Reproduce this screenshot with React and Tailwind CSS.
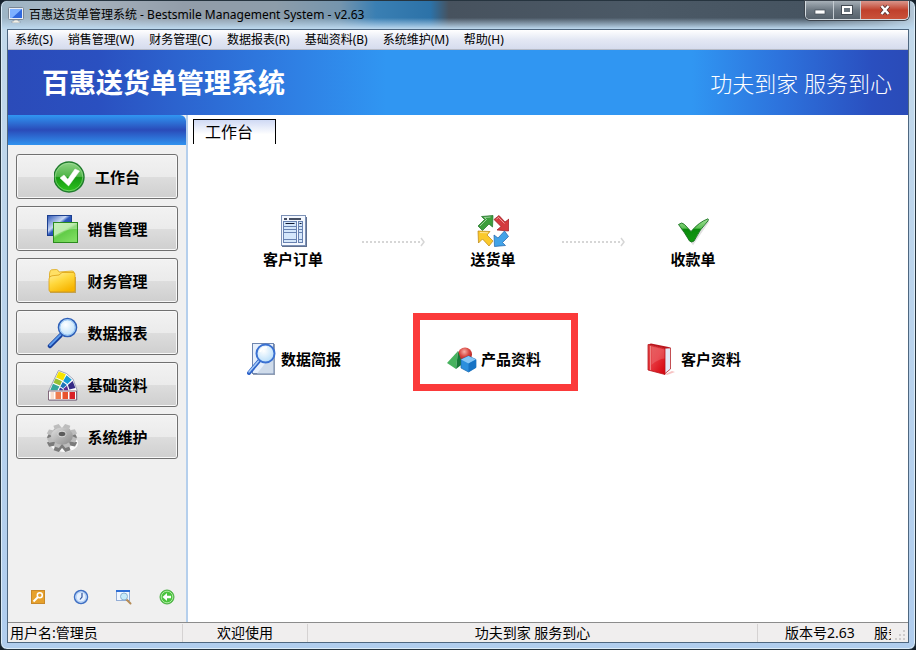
import React from "react";

const menus = ["系统(S)", "销售管理(W)", "财务管理(C)", "数据报表(R)", "基础资料(B)", "系统维护(M)", "帮助(H)"];

function Defs() {
  return (
    <svg width="0" height="0" className="absolute" aria-hidden="true">
      <defs>
        <linearGradient id="green" x1="0" y1="0" x2="0" y2="1">
          <stop offset="0" stopColor="#8fd486" />
          <stop offset="0.48" stopColor="#4fb548" />
          <stop offset="0.52" stopColor="#159a12" />
          <stop offset="1" stopColor="#2fc41f" />
        </linearGradient>
        <linearGradient id="check" x1="0" y1="0" x2="0" y2="1">
          <stop offset="0" stopColor="#a5e29a" />
          <stop offset="0.4" stopColor="#5cc055" />
          <stop offset="0.45" stopColor="#0a8a0c" />
          <stop offset="1" stopColor="#139a12" />
        </linearGradient>
        <linearGradient id="bluePane" x1="0" y1="0" x2="1" y2="1">
          <stop offset="0" stopColor="#2d55b5" />
          <stop offset="0.4" stopColor="#c9d8f4" />
          <stop offset="0.5" stopColor="#2c58bd" />
          <stop offset="1" stopColor="#163f9c" />
        </linearGradient>
        <linearGradient id="greenPane" x1="0" y1="0" x2="0.7" y2="1">
          <stop offset="0" stopColor="#b5eba0" />
          <stop offset="0.45" stopColor="#a2e48c" />
          <stop offset="0.55" stopColor="#62cc48" />
          <stop offset="1" stopColor="#7fdd62" />
        </linearGradient>
        <linearGradient id="folder" x1="0" y1="0" x2="0.6" y2="1">
          <stop offset="0" stopColor="#fff0a0" />
          <stop offset="0.5" stopColor="#ffd83d" />
          <stop offset="1" stopColor="#f7b500" />
        </linearGradient>
        <radialGradient id="lens" cx="0.4" cy="0.35" r="0.7">
          <stop offset="0" stopColor="#ffffff" />
          <stop offset="1" stopColor="#b4dcfa" />
        </radialGradient>
        <linearGradient id="steel" x1="0" y1="0" x2="1" y2="1">
          <stop offset="0" stopColor="#e2e2e2" />
          <stop offset="0.5" stopColor="#b4b4b4" />
          <stop offset="1" stopColor="#8a8a8a" />
        </linearGradient>
        <linearGradient id="redBook" x1="0" y1="0" x2="1" y2="1">
          <stop offset="0" stopColor="#e04a4a" />
          <stop offset="0.5" stopColor="#e5333a" />
          <stop offset="1" stopColor="#d4000b" />
        </linearGradient>
        <radialGradient id="redBall" cx="0.45" cy="0.3" r="0.7">
          <stop offset="0" stopColor="#f7b0a8" />
          <stop offset="0.5" stopColor="#d8453f" />
          <stop offset="1" stopColor="#a91a18" />
        </radialGradient>
      </defs>
    </svg>
  );
}

function Icon({ size = 32, children }) {
  return (
    <svg width={size} height={size} viewBox={"0 0 " + size + " " + size} className="shrink-0" aria-hidden="true">
      {children}
    </svg>
  );
}

const Ok = () => (
  <Icon>
    <circle cx="15" cy="16" r="15" fill="url(#green)" stroke="#1f7a2c" strokeWidth="1.4" />
    <circle cx="15" cy="16" r="13.8" fill="none" stroke="#a9e0a2" strokeWidth="0.8" opacity="0.7" />
    <path d="M6 17l4-3 3.800 4.300L21 8l4.500 2L14.600 25z" fill="#fff" stroke="#fff" strokeWidth="0.5" strokeLinejoin="round" />
  </Icon>
);

const Panes = () => (
  <Icon>
    <rect x="1.5" y="2.5" width="24" height="20" fill="url(#bluePane)" stroke="#1c3f8f" />
    <rect x="7.5" y="9.5" width="24" height="20" fill="url(#greenPane)" stroke="#2c8a1e" />
    <path d="M8 10h23v6Q20 15 8 23z" fill="#fff" opacity="0.3" />
  </Icon>
);

const Folder = () => (
  <Icon>
    <path d="M4 28V12h26v16z" fill="#b98c1c" opacity="0.7" />
    <path d="M3.500 9q0-3.500 2-4.200l5-.3q1.500 0 2.500 2.500L26 6q2 0 2.200 2v4H3.500z" fill="#ffe065" stroke="#dca81c" strokeWidth="0.8" />
    <path d="M3 14q.3-3 3-3.200L13 10l3-2.500h11q2 0 2 2V25q0 1.800-2 1.800H5q-2 0-2-1.800z" fill="url(#folder)" stroke="#dca012" strokeWidth="0.8" />
  </Icon>
);

const Magnifier = () => (
  <Icon>
    <path d="M4 29L14.500 18.500" stroke="#173f9c" strokeWidth="4.500" strokeLinecap="round" />
    <path d="M4 28.300L14.500 17.800" stroke="#5c9bed" strokeWidth="2" strokeLinecap="round" />
    <circle cx="21.500" cy="10.500" r="9" fill="url(#lens)" stroke="#2f60b8" strokeWidth="1.600" />
    <circle cx="21.500" cy="10.500" r="7.700" fill="none" stroke="#8bbdf2" strokeWidth="1" />
  </Icon>
);

const Swatches = () => (
  <Icon>
    <path d="M3 31V21L12.500 1.500l8 3L27 10l4 11v10z" fill="#fff" stroke="#8a8fa8" strokeWidth="0.8" />
    <path d="M12.800 2.500l7 2.800-2.800 6.200-7-3z" fill="#f5e400" />
    <path d="M9.500 9.300l6.500 2.900-2 4.300-6.500-2.800z" fill="#97bf35" />
    <path d="M7 14.800l6.400 2.700-2 3.700H4.200z" fill="#35a69b" />
    <path d="M20.600 6.200l5.200 4.600-4.300 4.300-4.300-3z" fill="#169bd5" />
    <path d="M16.800 13l4 2.900-3.700 3.300-2.700-1.700z" fill="#1d72b8" />
    <path d="M26.700 12l2.700 7-6 1.500-1.500-4.500z" fill="#352a85" />
    <path d="M21 16.800l1.400 4.400H18l-.6-1.500z" fill="#5f2d91" />
    <path d="M14 18.500l2.600 1.600.4 1.100h-4z" fill="#3c3c9d" />
    <path d="M2.500 22h28v9h-28z" fill="#fff" stroke="#6a4a60" strokeWidth="0.8" />
    <path d="M4.500 23h3.500v7H4.500z" fill="#f8ded0" />
    <path d="M9.500 23h5.500v7H9.500z" fill="#ef7d51" />
    <path d="M16.500 23H22v7h-5.500z" fill="#e8542f" />
    <path d="M23.500 23H29v7h-5.500z" fill="#d91f26" />
  </Icon>
);

const teeth = [0, 45, 90, 135, 180, 225, 270, 315];
const Gear = () => (
  <Icon>
    <ellipse cx="18" cy="22" rx="14" ry="9" fill="#fff" opacity="0.9" />
    <g transform="translate(16 19) scale(0.95 0.75)" fill="#7b7b7b">
      {teeth.map((a) => (
        <path key={a} d="M-4-9l1-7h6l1 7z" transform={"rotate(" + (a + 22) + ")"} />
      ))}
      <circle r="11" />
    </g>
    <g transform="translate(16 15) scale(0.95 0.75)">
      {teeth.map((a) => (
        <path key={a} d="M-4-9l1-7h6l1 7z" transform={"rotate(" + (a + 22) + ")"} fill="#bdbdbd" />
      ))}
      <circle r="11.500" fill="url(#steel)" />
    </g>
    <ellipse cx="16" cy="13" rx="4" ry="2.800" fill="#5c5c5c" stroke="#ececec" strokeWidth="0.8" />
  </Icon>
);

const Doc = () => (
  <Icon>
    <path d="M5 2h25v30H5z" fill="#60708f" />
    <rect x="4.500" y="0.500" width="24" height="30" fill="#f4f8ff" stroke="#7c91b6" />
    <path d="M7 4h3M12 4h12" stroke="#0d1730" strokeWidth="1.300" />
    <rect x="6.500" y="6.500" width="13" height="21" fill="#d5e7fb" stroke="#6882b1" />
    <rect x="21.500" y="6.500" width="4" height="21" fill="#d5e7fb" stroke="#6882b1" />
    <path d="M8.500 8.500h9M22.500 8.500h2" stroke="#0d1730" />
    <path d="M7 11.500h12M7 14.500h12M7 17.500h12M7 24.500h12M22 11.500h3M22 14.500h3M22 17.500h3M22 24.500h3" stroke="#6882b1" />
  </Icon>
);

const Cycle = () => (
  <Icon>
    <path d="M1 11L7.500 4.500 4.500 1.500 16 .5 15.500 12 12 9 5.500 15.500z" fill="#3c9e3c" stroke="#1f6f28" strokeWidth="0.7" />
    <path d="M17 4.500l5-4 6 6.500 4-3-.5 12L20 15l4-3.500z" fill="#d43b3f" stroke="#96191e" strokeWidth="0.7" />
    <path d="M1 16l12 .5-3 3.500 6 6-4 5-6.500-7L1.500 28z" fill="#fbc92c" stroke="#b98413" strokeWidth="0.7" />
    <path d="M17 20l.5 11.500 11-1-3-3 6-6-4-5.500-6.500 7z" fill="#42a3e8" stroke="#1f62a8" strokeWidth="0.7" />
    <path d="M3 11l6.500-6.500L7.500 2.500l6-.5M19.500 4l2-1.500 6 6M3 17.500l8 .3" stroke="#fff" strokeWidth="1" fill="none" opacity="0.5" />
  </Icon>
);

const Check = () => (
  <Icon>
    <path d="M4 13L16 28.500 31.500 6" fill="none" stroke="#999" strokeWidth="2" opacity="0.3" />
    <path d="M1.500 9.500Q5 6.500 7.500 9.500l6.500 7Q22 7 31 3.800q1 .3 0 2Q23 14 17 26q-2.500 2-4.500 0Q7.500 17 1.500 9.500z" fill="url(#check)" stroke="#17701f" strokeWidth="0.9" />
  </Icon>
);

const Report = () => (
  <Icon>
    <path d="M6 1h22v31H6z" fill="#8f9cb2" />
    <rect x="5.500" y="0.500" width="21" height="30" fill="#e7f0fc" stroke="#6f86af" />
    <path d="M26.500 10v20.500H10z" fill="#cfdbea" />
    <path d="M2 30L12 18" stroke="#2f63c9" strokeWidth="4" strokeLinecap="round" />
    <path d="M2 29L12 17.500" stroke="#a7ccf7" strokeWidth="1.500" strokeLinecap="round" />
    <circle cx="18.500" cy="10.500" r="9" fill="url(#lens)" stroke="#3b71d2" strokeWidth="2" />
    <path d="M13 9q2-5 7-4.500" stroke="#fff" strokeWidth="2" fill="none" />
  </Icon>
);

const Shapes = () => (
  <Icon>
    <circle cx="18" cy="11.500" r="7" fill="url(#redBall)" />
    <path d="M11 8L0 20l9 6z" fill="#47b25e" />
    <path d="M11 8l4.500 13L9 26z" fill="#167a37" />
    <path d="M21.500 13l7.500 3.500v8L21.500 29 14 25v-8.500z" fill="#2c8fdd" stroke="#1767af" strokeWidth="0.7" />
    <path d="M14 16.500l7.500 4 7.500-4-7.500-3.500z" fill="#85c6f6" />
    <path d="M21.500 20.500V29l7.500-4.500v-8z" fill="#1673c4" />
  </Icon>
);

const Book = () => (
  <Icon>
    <path d="M18 31l7-3 3 1-8 3z" fill="#f4aaaa" opacity="0.7" />
    <path d="M17.500 5l6 0v21l-6 5z" fill="#e3e8f7" stroke="#b8242a" strokeWidth="0.8" />
    <path d="M1 1.500L4 .5 24 4.500 18 5.500z" fill="#b9151c" />
    <path d="M1 1.500l17 4v26L1 27z" fill="url(#redBook)" stroke="#b8141c" strokeWidth="0.8" />
    <path d="M3.500 3v24" stroke="#ef8585" strokeWidth="1" />
    <path d="M4.500 3.500l13 3v9Q11 16 4.500 22z" fill="#fff" opacity="0.15" />
  </Icon>
);

const sideItems = [
  ["工作台", Ok],
  ["销售管理", Panes],
  ["财务管理", Folder],
  ["数据报表", Magnifier],
  ["基础资料", Swatches],
  ["系统维护", Gear],
];

const KeyIcon = () => (
  <Icon size={16}>
    <rect x="1.500" y="1.500" width="13" height="13" fill="#e6a12c" stroke="#c9892a" />
    <path d="M3.500 12.500L8 8" stroke="#fff" strokeWidth="2" />
    <circle cx="9.800" cy="6.200" r="2.500" fill="none" stroke="#fff" strokeWidth="1.500" />
  </Icon>
);
const ClockIcon = () => (
  <Icon size={16}>
    <circle cx="8" cy="8" r="6.500" fill="#e6f1ff" stroke="#3f70c4" strokeWidth="1.500" />
    <circle cx="8" cy="8" r="5" fill="none" stroke="#a7c8f3" />
    <path d="M9 4v4l-2 2.500" fill="none" stroke="#30549c" strokeWidth="1.200" />
  </Icon>
);
const FindIcon = () => (
  <Icon size={16}>
    <rect x="0.500" y="1.500" width="13" height="10" fill="#f1f7ff" stroke="#93add6" />
    <path d="M0 1h14v2H0z" fill="#2f6fd6" />
    <path d="M10.500 10.500l4 4" stroke="#b58b56" strokeWidth="2" strokeLinecap="round" />
    <circle cx="8" cy="7.500" r="3.500" fill="#c6ebfa" stroke="#8fb2d0" />
  </Icon>
);
const BackIcon = () => (
  <Icon size={16}>
    <circle cx="8" cy="8" r="7" fill="#49c33d" stroke="#4cae45" />
    <circle cx="8" cy="8" r="5.800" fill="none" stroke="#a9ea9c" />
    <path d="M3.500 8L8 4v2.700h4v2.600H8V12z" fill="#fff" />
  </Icon>
);

function FlowArrow() {
  return (
    <svg width="64" height="10" viewBox="0 0 64 10" className="mt-[22px] shrink-0" aria-hidden="true">
      <path d="M1 5h58" stroke="#d6d6d6" strokeWidth="2" strokeDasharray="2 2" />
      <path d="M60 1l3 4-3 4" fill="none" stroke="#d6d6d6" strokeWidth="1.500" />
    </svg>
  );
}

function Step({ icon: I, label }) {
  return (
    <button type="button" className="flex w-[136px] shrink-0 flex-col items-center gap-[2px] text-[15px] leading-[20px] font-bold">
      <I />
      {label}
    </button>
  );
}

function Shortcut({ icon: I, label, marked }) {
  return (
    <button type="button" className="relative flex h-8 w-[136px] shrink-0 items-center justify-center gap-[2px] text-[15px] leading-[20px] font-bold">
      <I />
      {label}
      {marked && <span className="pointer-events-none absolute -top-[30px] -right-4 -bottom-4 -left-[13px] border-[7px] border-[#fb3a3a]" />}
    </button>
  );
}

export default function App() {
  return (
    <div className="min-h-screen bg-[#15202b] font-['Noto_Sans','Noto_Sans_CJK_SC',sans-serif] text-black">
      <Defs />
      <div className="flex min-h-screen flex-col rounded-[7px] border border-[#26343f] bg-linear-to-b from-[#c3d9ea] to-[#b0cdee] px-[6px] pb-[6px] shadow-[inset_0_0_0_1px_#dcecf8]">
        <header className="-mx-[5px] flex h-7 shrink-0 items-start rounded-t-[6px] bg-[linear-gradient(to_bottom,transparent_60%,#bdd9ef_100%),linear-gradient(to_right,#9db5c6_0%,#a8b4bf_8%,#929da9_20%,#8d9daa_30%,#7595ad_37%,#3a7fb3_41%,#2c72a8_47%,#47525e_49%,#4b5966_70%,#465461_88%,#7f8d99_96%,#b5c8d8_100%)] pl-[6px]">
          <div className="flex h-7 grow items-center gap-[5px] text-[12px]">
            <svg width="16" height="16" viewBox="0 0 16 16" aria-hidden="true">
              <rect x="0.500" y="0.500" width="15" height="12" rx="1" fill="#e8eef7" stroke="#7b8794" />
              <rect x="2" y="2" width="12" height="9" fill="#2f68df" />
              <path d="M2 2h12L4 11H2z" fill="#7db0ff" />
              <path d="M6 13h4v1h2v2H4v-2h2z" fill="#f1f1e8" stroke="#7b8794" strokeWidth="0.500" />
            </svg>
            <h1 className="whitespace-nowrap">百惠送货单管理系统 - Bestsmile Management System - v2.63</h1>
          </div>
          <div className="mr-[5px] flex h-[19px] shrink-0 overflow-hidden rounded-b-[5px] border border-t-0 border-[#d5dce2] shadow-[0_0_0_1px_#3b434c]">
            <button type="button" aria-label="最小化" className="flex w-7 items-center justify-center border-r border-[#c5ccd2] bg-linear-to-b from-[#a7b0b8] via-[#6d7882] via-50% to-[#56616b]">
              <svg width="12" height="12" viewBox="0 0 12 12"><rect x="1" y="6" width="10" height="4" fill="#fff" stroke="#444c55" strokeWidth="0.700" /></svg>
            </button>
            <button type="button" aria-label="最大化" className="flex w-[27px] items-center justify-center border-r border-[#c5ccd2] bg-linear-to-b from-[#a7b0b8] via-[#6d7882] via-50% to-[#56616b]">
              <svg width="12" height="12" viewBox="0 0 12 12"><rect x="1.500" y="2.500" width="9" height="7" fill="none" stroke="#444c55" strokeWidth="3" /><rect x="2" y="3" width="8" height="6" fill="#68737d" stroke="#fff" strokeWidth="2" /></svg>
            </button>
            <button type="button" aria-label="关闭" className="flex w-[47px] items-center justify-center bg-linear-to-b from-[#d9958b] via-[#c0402c] via-50% to-[#c9523a]">
              <svg width="12" height="12" viewBox="0 0 12 12"><path d="M2.500 2l7 8M9.500 2l-7 8" stroke="#4f302f" strokeWidth="4" /><path d="M2.500 2l7 8M9.500 2l-7 8" stroke="#fff" strokeWidth="2.500" /></svg>
            </button>
          </div>
        </header>

        <div className="flex grow flex-col border border-[#4e6780] bg-white">
          <nav className="flex h-5 shrink-0 items-center gap-[15px] border-b border-[#b5bac6] bg-linear-to-b from-white via-[#e4e8f4] via-50% to-[#d6dcee] pl-[7px] text-[12px] leading-[16px]">
            {menus.map((m) => (
              <button key={m} type="button" className="whitespace-nowrap">{m}</button>
            ))}
          </nav>

          <div className="flex h-[65px] shrink-0 items-center justify-between bg-[linear-gradient(to_right,#2b4bb9_0%,#2a50c0_10%,#2f80e4_32%,#3096f2_42%,#3096f2_76%,#2d72dc_86%,#2a4fbf_96%,#2a4bb8_100%)] pr-4 pl-[34px] text-white">
            <p className="text-[27px] leading-[32px] font-bold whitespace-nowrap">百惠送货单管理系统</p>
            <p className="text-[22px] leading-[28px] font-light whitespace-nowrap">功夫到家 服务到心</p>
          </div>

          <div className="flex grow">
            <aside className="flex w-[180px] shrink-0 flex-col border-r-2 border-[#b5cfec] bg-[#f0f0f0]">
              <div className="h-[30px] rounded-tr-[6px] bg-linear-to-b from-[#3096f2] via-[#2a4bb9] via-50% to-[#3092ef]" />
              <div className="flex flex-col gap-[7px] px-2 pt-[9px]">
                {sideItems.map(([label, I]) => (
                  <button key={label} type="button" className="flex h-[45px] items-center justify-center gap-[9px] rounded-[3px] border border-[#707070] bg-[linear-gradient(to_bottom,#f2f2f2_0%,#ebebeb_50%,#dddddd_51%,#cfcfcf_100%)] text-[15px] leading-[20px] font-bold shadow-[inset_0_0_0_1px_#f8f8f8]">
                    <I />
                    {label}
                  </button>
                ))}
              </div>
              <div className="mt-auto flex gap-[27px] pb-[17px] pl-[22px]">
                <button type="button" aria-label="密码"><KeyIcon /></button>
                <button type="button" aria-label="时间"><ClockIcon /></button>
                <button type="button" aria-label="查找"><FindIcon /></button>
                <button type="button" aria-label="返回"><BackIcon /></button>
              </div>
            </aside>

            <main className="flex grow flex-col pt-1 pl-[5px]">
              <div className="flex">
                <button type="button" className="h-[25px] w-[83px] border border-b-0 border-black bg-linear-to-b from-[#cfd9f4] to-white to-60% pl-[11px] text-left text-[16px] leading-[24px]">工作台</button>
              </div>
              <div className="flex pt-[71px] pl-8">
                <Step icon={Doc} label="客户订单" />
                <FlowArrow />
                <Step icon={Cycle} label="送货单" />
                <FlowArrow />
                <Step icon={Check} label="收款单" />
              </div>
              <div className="flex gap-16 pt-[74px] pl-[33px]">
                <Shortcut icon={Report} label="数据简报" />
                <Shortcut icon={Shapes} label="产品资料" marked />
                <Shortcut icon={Book} label="客户资料" />
              </div>
            </main>
          </div>

          <footer className="flex h-5 shrink-0 items-center border-t border-[#8c8c8c] bg-[#f0eeee] text-[14px] leading-[18px] whitespace-nowrap">
            <span className="w-[175px] border-r border-[#d5d2d2] pl-[2px]">用户名:管理员</span>
            <span className="w-[125px] border-r border-[#d5d2d2] text-center">欢迎使用</span>
            <span className="grow border-r border-[#d5d2d2] text-center">功夫到家 服务到心</span>
            <span className="w-[116px] pl-[27px]">版本号2.63</span>
            <span className="w-[17px] overflow-hidden">服务</span>
            <svg width="17" height="18" viewBox="0 0 17 18" aria-hidden="true">
              <path d="M12 6h2v2h-2zM8 10h2v2H8zM12 10h2v2h-2zM4 14h2v2H4zM8 14h2v2H8zM12 14h2v2h-2z" fill="#cfcccc" />
            </svg>
          </footer>
        </div>
      </div>
    </div>
  );
}
